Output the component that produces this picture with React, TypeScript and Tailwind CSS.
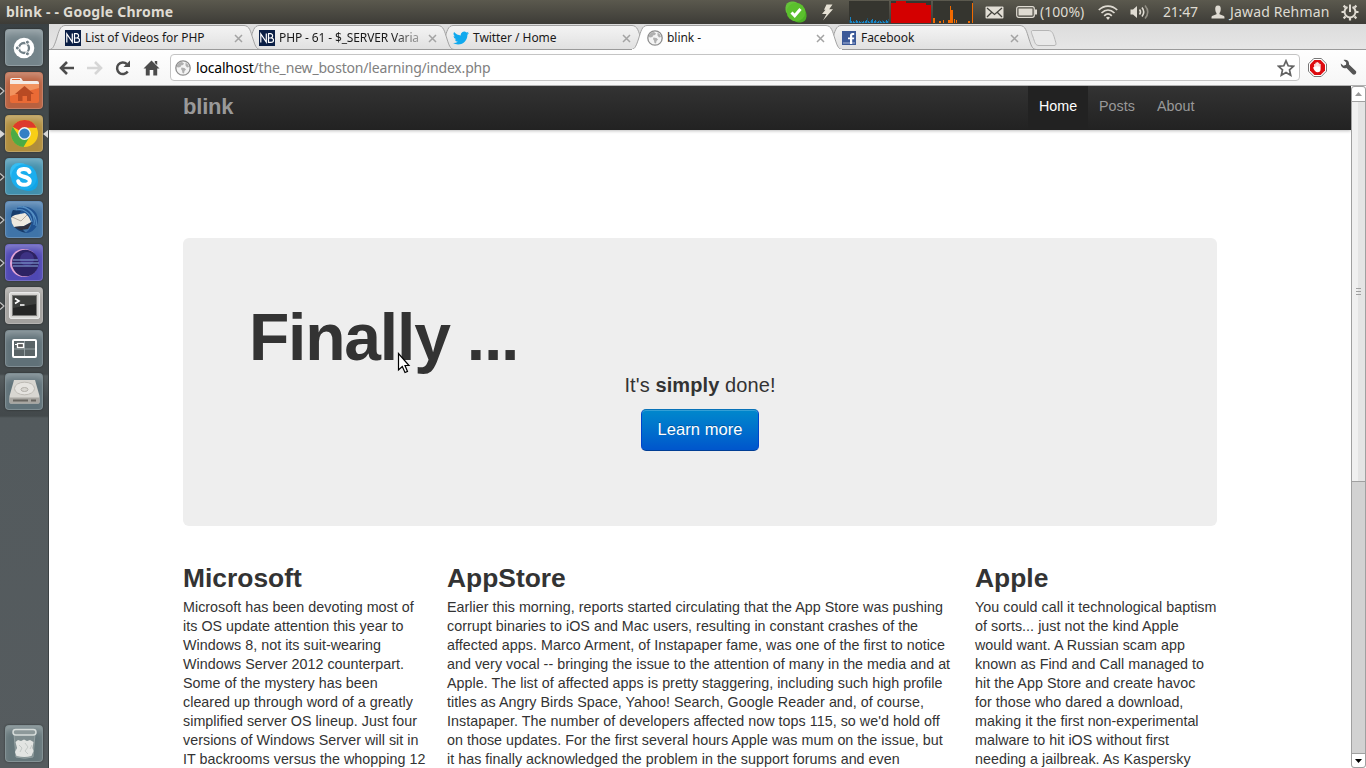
import type { ReactNode } from "react";

const UI = "font-['Noto_Sans','Open_Sans',sans-serif]";

function TabShape({ active }: { active?: boolean }) {
  return (
    <svg className="absolute inset-0" width="210" height="26" viewBox="0 0 210 26" fill="none">
      <defs>
        <linearGradient id="tabIdle" x1="0" y1="0" x2="0" y2="1">
          <stop offset="0" stopColor="#f4f4f4" />
          <stop offset="1" stopColor="#e0e0e0" />
        </linearGradient>
      </defs>
      <path
        d="M0 25.5C3 25 4.500 21 6.500 15C9 7 10 1.800 15 1.500H194C199.500 1.800 200.500 7 203 15C205 21 206 25 210 25.500"
        fill={active ? "#fefefe" : "url(#tabIdle)"}
        stroke="#a2a2a2"
      />
      {active ? <path d="M0 25.500H210" stroke="#fdfdfd" /> : <path d="M0 25.500H210" stroke="#9a9a9a" />}
    </svg>
  );
}

function Globe() {
  return (
    <svg width="16" height="16" viewBox="0 0 16 16">
      <circle cx="8" cy="8" r="7.200" fill="#f4f4f4" stroke="#8e8e8e" strokeWidth="1.300" />
      <path d="M2 5L4 2.500L7 2L9 3.500L8 5L6 5.500L5.500 7L3 7.500L2 7ZM6.500 7.500L9.500 8L11 9.500L9.500 11L9 13.500L7.500 13L7 10.500L6 9ZM10.500 2.500L13 4.500L14 7L12 7.500L10.500 5.500Z" fill="#b0b0b0" />
    </svg>
  );
}

function NB() {
  return (
    <svg width="16" height="16" viewBox="0 0 16 16">
      <rect width="16" height="16" fill="#0b1f45" />
      <path d="M1.800 12.500V4L7.300 12V3.500M9.500 3.700V12.300H12C15.300 12.300 15.300 8 12 8H9.500H11.500C14.300 7.800 14.300 3.700 11.500 3.700H9" stroke="#fff" strokeWidth="1.200" fill="none" />
    </svg>
  );
}

function Twitter() {
  return (
    <svg width="16" height="16" viewBox="0 0 24 24">
      <path
        fill="#10a9ee"
        d="M23.950 4.570a10 10 0 0 1-2.820.770 4.960 4.960 0 0 0 2.160-2.720c-.95.550-2 .960-3.130 1.180a4.920 4.920 0 0 0-8.380 4.480C7.690 8.100 4.070 6.130 1.640 3.160a4.920 4.920 0 0 0 1.520 6.570 4.900 4.900 0 0 1-2.230-.610v.060a4.920 4.920 0 0 0 3.950 4.830 5 5 0 0 1-2.210.080 4.940 4.940 0 0 0 4.600 3.420A9.870 9.870 0 0 1 0 19.540a13.990 13.990 0 0 0 7.560 2.210c9.050 0 14-7.500 14-13.980 0-.21 0-.420-.02-.630a9.940 9.940 0 0 0 2.410-2.570z"
      />
    </svg>
  );
}

function Facebook() {
  return (
    <svg className="ml-px" width="14" height="14" viewBox="0 0 14 14">
      <rect width="14" height="14" fill="#3b5998" />
      <rect x="1" y="11" width="12" height="2" fill="#7388b8" />
      <path d="M8 13V8.300H6V6.400H8V4.800C8 2.900 9 2 10.600 2H12.200V4H11.200C10.400 4 10.200 4.300 10.200 5V6.400H12.200L12 8.300H10.200V13Z" fill="#fff" />
    </svg>
  );
}

const tabs = [
  { title: "List of Videos for PHP", icon: <NB />, z: "z-[5]" },
  { title: "PHP - 61 - $_SERVER Varia", icon: <NB />, z: "z-[4]", fade: true },
  { title: "Twitter / Home", icon: <Twitter />, z: "z-[3]" },
  { title: "blink -", icon: <Globe />, z: "z-[6]", active: true },
  { title: "Facebook", icon: <Facebook />, z: "z-[1]" },
];

function TabStrip() {
  return (
    <div className="flex h-[26px] shrink-0 border-b border-[#9a9a9a] bg-gradient-to-b from-[#dcdcdc] to-[#e6e6e6]">
      <div className="flex h-[26px] pl-px">
        {tabs.map((t) => (
          <div key={t.title} className={`relative -mr-4 h-[26px] w-[210px] shrink-0 ${t.z}`}>
            <TabShape active={t.active} />
            <div className="relative flex h-[26px] items-center pt-0.5 pl-[15px]">
              <span className="flex w-5 shrink-0">{t.icon}</span>
              <span
                className={`w-[145px] whitespace-nowrap text-[12px] leading-4 text-[#1a1a1a] ${
                  t.fade
                    ? "tracking-[-0.13px] [mask-image:linear-gradient(to_right,#000_114px,rgba(0,0,0,.25)_144px)]"
                    : "tracking-[-0.05px]"
                }`}
              >
                {t.title}
              </span>
              <svg className="ml-1" width="9" height="9" viewBox="0 0 9 9">
                <path d="M1 1L8 8M8 1L1 8" stroke="#a3a3a3" strokeWidth="1.500" />
              </svg>
            </div>
          </div>
        ))}
      </div>
      <svg className="ml-[10px] mt-1.5" width="28" height="17" viewBox="0 0 28 17">
        <path d="M2.500 0.500H18C22 0.500 23 3 24.500 8C25.500 12 27.500 15.500 24 15.500H9C5.500 15.500 5 13 3.500 8.500C2.500 5 0 1 2.500 0.500Z" fill="#e9e9e9" stroke="#b5b5b5" />
      </svg>
    </div>
  );
}

function Toolbar() {
  return (
    <div className="flex h-9 shrink-0 items-center border-b border-[#b2b2b2] bg-gradient-to-b from-[#fefefe] to-[#f6f6f6]">
      <svg className="ml-[10px]" width="16" height="14" viewBox="0 0 16 14" fill="none" stroke="#4c4c4c" strokeWidth="2.600">
        <path d="M15 7H2.500M8 1L2 7L8 13" />
      </svg>
      <svg className="ml-3" width="16" height="14" viewBox="0 0 16 14" fill="none" stroke="#d6d6d6" strokeWidth="2.600">
        <path d="M0 7H13M8 1L14 7L8 13" />
      </svg>
      <svg className="ml-3" width="16" height="16" viewBox="0 0 16 16">
        <path d="M12.700 11.500A5.800 5.800 0 1 1 11.800 4" fill="none" stroke="#4c4c4c" strokeWidth="2.500" />
        <path d="M15 0.500V7H8.500Z" fill="#4c4c4c" />
      </svg>
      <svg className="ml-3" width="17" height="16" viewBox="0 0 17 16">
        <path d="M8.500 0.500L16.500 8.500H14.200V15.500H10.300V10H6.700V15.500H2.800V8.500H0.500ZM11.800 1H14.200V5L11.800 3Z" fill="#4c4c4c" />
      </svg>
      <div className="ml-[10px] flex h-[27px] w-[1130px] items-center rounded-[4px] border border-[#c4c4c4] bg-white pl-1">
        <Globe />
        <div className="ml-[5px] flex-1 text-[14px] tracking-[-0.18px] text-[#808080]">
          <span className="text-black">localhost</span>/the_new_boston/learning/index.php
        </div>
        <svg className="mr-1" width="18" height="18" viewBox="0 0 18 18">
          <path d="M9 1.800L11.200 6.800L16.500 7.300L12.500 10.900L13.700 16.200L9 13.400L4.300 16.200L5.500 10.900L1.500 7.300L6.800 6.800Z" fill="#fff" stroke="#636363" strokeWidth="1.700" />
        </svg>
      </div>
      <svg className="ml-2" width="19" height="19" viewBox="0 0 19 19">
        <path d="M5.800 0.500H13.200L18.500 5.800V13.200L13.200 18.500H5.800L0.500 13.200V5.800Z" fill="#fff" stroke="#777" />
        <path d="M6.400 2H12.600L17 6.400V12.600L12.600 17H6.400L2 12.600V6.400Z" fill="#dd0b10" />
        <path d="M5 9.500L6.200 9V6H7.400V4.800H8.600V4.300H10V4.800H11.300V6H12.600V11C12.600 13.300 11.700 14.200 9.700 14.200C7.500 14.200 6.300 12.500 5 9.500Z" fill="#fff" />
        <path d="M7.500 5.500V8.500M8.900 5V8.500M10.300 5V8.500M11.500 6V8.500" stroke="#e88" strokeWidth=".4" />
      </svg>
      <svg className="ml-[13px]" width="17" height="17" viewBox="0 0 17 17">
        <path d="M3.500 1C6.500 0 9.500 2 9 5.500L15.800 12C17.300 14 14.600 16.800 12.600 15.200L6.500 9C3.500 10 0.500 8 0.800 4.500L3.500 6.800L6 5.800L6.200 3.500Z" fill="#555" />
      </svg>
    </div>
  );
}

function StatusGraph({ children }: { children: ReactNode }) {
  return (
    <svg className="mr-0.5" width="40" height="22" viewBox="0 0 40 22" shapeRendering="crispEdges">
      <rect width="40" height="22" fill="#35352f" />
      {children}
    </svg>
  );
}

const netBars = [3, 6, 2, 1, 2, 1, 2, 3, 2, 1, 2, 1, 2, 1, 2, 1, 2, 3, 5, 2, 1, 2, 3, 4, 1, 2, 3, 2, 1, 2, 3, 2, 1, 3, 2, 1, 2, 3, 2, 4];

function TopPanel() {
  return (
    <header className="flex h-6 shrink-0 items-center bg-gradient-to-b from-[#5b594e] to-[#3d3c37] text-[#dfdbd2]">
      <div className="w-[785px] pl-1.5 text-[14px] font-bold leading-5 tracking-[0.22px]">blink - - Google Chrome</div>
      <svg width="22" height="22" viewBox="0 0 22 22">
        <rect x="0.500" y="0.500" width="14" height="14" rx="6" fill="#66c33a" />
        <rect x="7.500" y="7.500" width="14" height="14" rx="6" fill="#4cae25" />
        <circle cx="11" cy="11" r="9.300" fill="#5bc02d" />
        <path d="M6.500 11.500L9.700 14.700L15.500 8" stroke="#fff" strokeWidth="3" fill="none" />
      </svg>
      <svg className="ml-[14px]" width="13" height="17" viewBox="0 0 13 17">
        <path d="M5.500 0.500H11.500L8.200 5.200H12L2 16.500L5.500 10H1L4.500 5.800H3Z" fill="#e6e1d4" />
      </svg>
      <div className="ml-[15px] flex">
        <StatusGraph>
          {netBars.map((h, i) => (
            <rect key={i} x={i} y={22 - h} width="1" height={h} fill={i % 3 ? "#1784c4" : "#23526b"} />
          ))}
        </StatusGraph>
        <StatusGraph>
          <path d="M0 22V2H5V0H15V2H35V4H40V22Z" fill="#d40000" />
        </StatusGraph>
        <StatusGraph>
          <path d="M0 22V17H2V22ZM6 22V20H8V22ZM10 22V19H11V22ZM15 22V19H17V5H18V9H20V22ZM21 22V18H22V22ZM23 22V19H24V22ZM35 22V20H37V22ZM39 22V2H40V22Z" fill="#f26a00" />
        </StatusGraph>
      </div>
      <svg className="ml-[10px]" width="19" height="13" viewBox="0 0 19 13">
        <rect x="0.500" y="0.500" width="18" height="12" rx="1" fill="#e2ded5" />
        <path d="M2 2L9.500 8.500L17 2M2 11L6.500 6.500M17 11L12.500 6.500" stroke="#45443e" strokeWidth="1.300" fill="none" />
      </svg>
      <svg className="ml-3" width="21" height="12" viewBox="0 0 21 12">
        <rect x="0.700" y="0.700" width="17.600" height="10.600" rx="2" fill="none" stroke="#dfdbd2" strokeWidth="1.200" />
        <rect x="2.500" y="2.500" width="14" height="7" fill="#dfdbd2" />
        <rect x="19" y="3.500" width="2" height="5" fill="#dfdbd2" />
      </svg>
      <span className="ml-[3px] w-[46px] whitespace-nowrap text-[14px] leading-5 tracking-[0.05px]">(100%)</span>
      <svg className="ml-3" width="20" height="15" viewBox="0 0 20 15" fill="none" stroke="#dfdbd2" strokeWidth="1.700">
        <path d="M0.800 5C6-.3 14-.3 19.200 5M3.500 8C7.500 4.200 12.500 4.200 16.500 8M6.200 10.800C8.500 8.500 11.500 8.500 13.800 10.800" />
        <path d="M8 12.500L10 15L12 12.500Q10 11 8 12.500Z" fill="#dfdbd2" stroke="none" />
      </svg>
      <svg className="ml-3" width="20" height="16" viewBox="0 0 20 16" fill="none" stroke="#dfdbd2" strokeWidth="1.600">
        <path d="M0.500 5.500H3L7 2V14L3 10.500H0.500Z" fill="#dfdbd2" stroke="none" />
        <path d="M9.500 5.500Q11.500 8 9.500 10.500M12 3.500Q15.500 8 12 12.500" />
        <path d="M15 1.500Q20.500 8 15 14.500" stroke="#918e84" />
      </svg>
      <span className="ml-[13px] w-9 whitespace-nowrap text-[14px] leading-5 tracking-[-0.2px]">21:47</span>
      <svg className="ml-3" width="14" height="14" viewBox="0 0 14 14">
        <path d="M7 0.500C4.500 0.500 4 2.500 4.300 5C4.500 6.500 5 7.500 5.500 8V9.200L1 11C.5 11.500.5 12.500.5 13.500H13.500C13.500 12.500 13.500 11.500 13 11L8.500 9.200V8C9 7.500 9.500 6.500 9.700 5C10 2.500 9.500.5 7 .5Z" fill="#dfdbd2" />
      </svg>
      <span className="ml-[5px] w-[101px] whitespace-nowrap text-[14px] leading-5 tracking-[0.15px]">Jawad Rehman</span>
      <svg className="ml-[10px]" width="18" height="18" viewBox="0 0 18 18" fill="none" stroke="#dfdbd2">
        <path d="M6.500 4A5.500 5.500 0 1 0 11.500 4" strokeWidth="2" />
        <path d="M9 1.500V9" strokeWidth="2" />
        <path d="M4.500 4.500L2.600 2.600M13.500 4.500L15.400 2.600M3.500 9H.5M14.500 9H17.500M4.500 13.500L2.600 15.400M13.500 13.500L15.400 15.400M9 15V17.500" strokeWidth="2.200" />
      </svg>
    </header>
  );
}

function Tile({ bg, running, focused, children }: { bg: string; running?: boolean; focused?: boolean; children: ReactNode }) {
  return (
    <div className="flex h-[37px] w-[48px] shrink-0 items-center">
      <svg className="w-[5px] shrink-0" width="5" height="10" viewBox="0 0 5 10">
        {running && !focused && <path d="M0 1.500L4 5L0 8.500" fill="#333" stroke="#c8c8c8" strokeWidth="1.200" />}
        {focused && <path d="M0 1L5 5L0 9Z" fill="#d8d8d8" />}
      </svg>
      <div className={`flex h-[37px] w-[38px] shrink-0 items-center justify-center rounded-[4px] border border-white/20 shadow-[inset_0_7px_8px_-4px_rgba(255,255,255,.35),0_0_2px_rgba(0,0,0,.5)] ${bg}`}>
        {children}
      </div>
      <svg className="w-[5px] shrink-0" width="5" height="10" viewBox="0 0 5 10">
        {focused && <path d="M5 1L0 5L5 9Z" fill="#d8d8d8" />}
      </svg>
    </div>
  );
}

function Launcher() {
  return (
    <aside className="flex w-[49px] shrink-0 flex-col border-r border-[#3c4244] bg-[linear-gradient(to_bottom,#3a4144_0px,#43494b_60px,#43494b_350px,#565d5f_352px,#454b4e_375px,#43494b_392px,#535a5d_394px,#565c5f_744px)] pt-[5px] pb-[6px]">
      <div className="flex flex-col gap-1.5">
        <Tile bg="bg-[#74848a]">
          <svg width="22" height="22" viewBox="0 0 22 22">
            <circle cx="11" cy="11" r="10.300" fill="#fff" />
            <circle cx="11" cy="11" r="5" fill="none" stroke="#718087" strokeWidth="2.300" />
            <path d="M11 11L2 11M11 11L15.500 3.200M11 11L15.500 18.800" stroke="#fff" strokeWidth="1" />
            <g fill="#718087" stroke="#fff" strokeWidth="1">
              <circle cx="4.300" cy="11" r="2" />
              <circle cx="14.400" cy="5.200" r="2" />
              <circle cx="14.400" cy="16.800" r="2" />
            </g>
          </svg>
        </Tile>
        <Tile bg="bg-[#b8603f]" running>
          <svg width="31" height="27" viewBox="0 0 31 27">
            <path d="M1 3Q1 1 3 1H12L14 4H28Q30 4 30 6V10H1Z" fill="#f3ebe6" />
            <path d="M3 2.500H11" stroke="#e8622b" />
            <path d="M1 7H30V24Q30 26 28 26H3Q1 26 1 24Z" fill="#ea6a35" />
            <path d="M1 7H30V11L1 19Z" fill="#f2935f" />
            <path d="M15.500 9L25 17H22V24H18V19H13.500V24H9V17H6Z" fill="#b84a23" />
          </svg>
        </Tile>
        <Tile bg="bg-[#b08d3c]" running focused>
          <svg width="29" height="29" viewBox="0 0 30 30">
            <circle cx="15" cy="15" r="14" fill="#f8cf16" />
            <path d="M15 15L2.800 8A14 14 0 0 1 27.600 9H15Z" fill="#dd3a2c" />
            <path d="M2.800 8A14 14 0 0 0 14 29L20.500 18L15 15L9.500 18Z" fill="#4cab45" />
            <circle cx="15" cy="15" r="6.600" fill="#f3f3f3" />
            <circle cx="15" cy="15" r="5.300" fill="#347fc4" />
          </svg>
        </Tile>
        <Tile bg="bg-[#418fac]" running>
          <svg width="30" height="30" viewBox="0 0 30 30">
            <rect x="1" y="1" width="19" height="19" rx="8.500" fill="#35bdf2" />
            <rect x="10" y="10" width="19" height="19" rx="8.500" fill="#12a4e5" />
            <circle cx="15" cy="15" r="12.800" fill="#1aaeee" />
            <path d="M20.500 10C19 5.500 9.500 6 9.500 10.700C9.500 15.700 20.800 13.700 20.800 18.900C20.800 24 10.500 24 9.200 19.200" fill="none" stroke="#fff" strokeWidth="4" strokeLinecap="round" />
          </svg>
        </Tile>
        <Tile bg="bg-[#3f74a8]" running>
          <svg width="30" height="30" viewBox="0 0 30 30">
            <path d="M8 3C16-1 28 3 29 14C29.500 23 22 29 16 28C20 26 23 21 22 16L8 6Z" fill="#205291" />
            <path d="M9 2C18 1 27 8 25 20M14 1.500C22 4 29 12 27 21M7 5C14 3 22 8 23 17" stroke="#5590c4" strokeWidth="1.100" fill="none" />
            <path d="M4 5C2 8 1 15 4 20C7 25 12 27 17 28C10 22 8 12 12 6Z" fill="#173c6b" />
            <path d="M2 13Q3 11 6 10L16 8Q20 11 22 17L15 21L5 22Q2 18 2 13Z" fill="#eee9df" />
            <path d="M3 12L12 16L18 10" fill="none" stroke="#a39c90" strokeWidth=".8" />
            <path d="M5 22L15 21L23 17L19 24L12 25Z" fill="#302f3b" />
          </svg>
        </Tile>
        <Tile bg="bg-[#4f48b4]" running>
          <svg width="30" height="30" viewBox="0 0 30 30">
            <circle cx="15" cy="15" r="14" fill="#e2a4d5" />
            <circle cx="16.300" cy="15" r="13.300" fill="#2c2262" />
            <circle cx="18" cy="11" r="7" fill="#3d3283" />
            <path d="M4 12H29M3 15H30M4 18H29" stroke="#87aade" strokeWidth="1.200" />
          </svg>
        </Tile>
        <Tile bg="bg-[#a3a19e]" running>
          <svg width="31" height="27" viewBox="0 0 31 27">
            <rect x="0.700" y="0.700" width="29.600" height="25.600" rx="1" fill="#d3d2cf" stroke="#f6f6f6" />
            <rect x="3.500" y="3.500" width="24" height="20" fill="#252625" stroke="#797977" />
            <path d="M4 4H27V12L4 16Z" fill="#3c3e3c" />
            <path d="M6 6.500L10 9L6 11.500M11 13H15.500" fill="none" stroke="#fff" strokeWidth="1.600" />
          </svg>
        </Tile>
        <Tile bg="bg-[#607178]">
          <svg width="25" height="19" viewBox="0 0 25 19">
            <rect x="1" y="1" width="23" height="17" rx="1" fill="#5a6467" stroke="#fff" strokeWidth="2" />
            <path d="M12.500 2V17M2 10H23" stroke="#929da0" />
            <rect x="5.500" y="4.500" width="6" height="4" fill="#555" stroke="#fff" strokeWidth="1.300" />
            <path d="M3 5.500H5" stroke="#fff" />
          </svg>
        </Tile>
        <Tile bg="bg-[#607279]">
          <svg width="31" height="25" viewBox="0 0 31 25">
            <path d="M5 1H26L30.500 17V23Q30.500 24.500 29 24.500H2Q.5 24.500.5 23V17Z" fill="#d8d6d1" />
            <path d="M.5 18.500H30.500V23Q30.500 24.500 29 24.500H2Q.5 24.500.5 23Z" fill="#a8a6a1" />
            <ellipse cx="15.500" cy="9.500" rx="10" ry="6.300" fill="#e6e4e0" stroke="#bebbb5" />
            <ellipse cx="15.500" cy="10.500" rx="3.500" ry="2" fill="#d8d6d1" stroke="#b4b1ab" />
            <path d="M4 21.500H19M22 21.500H27" stroke="#676560" strokeWidth="2" />
          </svg>
        </Tile>
      </div>
      <div className="mt-auto">
        <Tile bg="bg-[#66777b]">
          <svg width="25" height="31" viewBox="0 0 25 31">
            <path d="M2 6L4 29Q12.500 31.500 21 29L23 6Z" fill="#7f8d8f" stroke="#94a1a2" />
            <path d="M3.500 14L6 12L9 13L12 11.500L15 13L18 12L21.500 14L20.500 20L21.500 23L19.500 28Q12.500 30 4.500 28L3 24L5 20Z" fill="#e2e4e2" />
            <path d="M7 17L10 20L8 24M13 15L16 19L13 23L16 26M20 17L18 21" stroke="#c3c8c6" fill="none" />
            <rect x="1" y="1.500" width="23" height="5.500" rx="2.700" fill="#8d999a" stroke="#d6dcda" strokeWidth="1.500" />
          </svg>
        </Tile>
      </div>
    </aside>
  );
}

function Scrollbar() {
  return (
    <div className="flex w-[15px] shrink-0 flex-col rounded-[3px] border border-[#a0a0a0] bg-[#d2d2d2]">
      <div className="flex h-3.5 shrink-0 items-center justify-center rounded-t-[3px] bg-white">
        <svg width="7" height="4" viewBox="0 0 7 4"><path d="M3.500 0L7 4H0Z" fill="#999" /></svg>
      </div>
      <div className="flex h-[381px] shrink-0 flex-col items-center justify-center gap-0.5 border-y border-[#a0a0a0] bg-[linear-gradient(to_right,#f0f0f0_50%,#e4e4e4_50%)]">
        <div className="h-px w-[5px] bg-[#a0a0a0]" />
        <div className="h-px w-[5px] bg-[#a0a0a0]" />
        <div className="h-px w-[5px] bg-[#a0a0a0]" />
      </div>
      <div className="mt-auto flex h-3.5 shrink-0 items-center justify-center rounded-b-[3px] border-t border-[#a0a0a0] bg-white">
        <svg width="7" height="4" viewBox="0 0 7 4"><path d="M3.500 4L7 0H0Z" fill="#000" /></svg>
      </div>
    </div>
  );
}

const articles = [
  {
    title: "Microsoft",
    width: "w-[242px]",
    lines: [
      "Microsoft has been devoting most of",
      "its OS update attention this year to",
      "Windows 8, not its suit-wearing",
      "Windows Server 2012 counterpart.",
      "Some of the mystery has been",
      "cleared up through word of a greatly",
      "simplified server OS lineup. Just four",
      "versions of Windows Server will sit in",
      "IT backrooms versus the whopping 12",
    ],
  },
  {
    title: "AppStore",
    width: "w-[506px]",
    lines: [
      "Earlier this morning, reports started circulating that the App Store was pushing",
      "corrupt binaries to iOS and Mac users, resulting in constant crashes of the",
      "affected apps. Marco Arment, of Instapaper fame, was one of the first to notice",
      "and very vocal -- bringing the issue to the attention of many in the media and at",
      "Apple. The list of affected apps is pretty staggering, including such high profile",
      "titles as Angry Birds Space, Yahoo! Search, Google Reader and, of course,",
      "Instapaper. The number of developers affected now tops 115, so we'd hold off",
      "on those updates. For the first several hours Apple was mum on the issue, but",
      "it has finally acknowledged the problem in the support forums and even",
    ],
  },
  {
    title: "Apple",
    width: "w-[242px]",
    lines: [
      "You could call it technological baptism",
      "of sorts... just not the kind Apple",
      "would want. A Russian scam app",
      "known as Find and Call managed to",
      "hit the App Store and create havoc",
      "for those who dared a download,",
      "making it the first non-experimental",
      "malware to hit iOS without first",
      "needing a jailbreak. As Kaspersky",
    ],
  },
];

function Page() {
  return (
    <main className="flex-1 overflow-hidden bg-white font-['Liberation_Sans',Arial,sans-serif] text-[#333]">
      <nav className="h-11 bg-gradient-to-b from-[#333] to-[#222] shadow-[0_1px_3px_rgba(0,0,0,.25)]">
        <div className="mx-auto flex h-11 w-[1034px] justify-between">
          <span className="pt-[10px] text-[22px] font-bold leading-[22px] tracking-[-0.2px] text-[#999]">blink</span>
          <div className="mr-[11px] flex text-[14.300px] leading-5 tracking-[0.03px] text-[#999]">
            <span className="w-[60px] bg-[#222] pt-[10px] pl-[11px] text-white">Home</span>
            <span className="w-[58px] pt-[10px] pl-[11px]">Posts</span>
            <span className="w-[60px] pt-[10px] pl-[11px]">About</span>
          </div>
        </div>
      </nav>
      <section className="relative mx-auto mt-[108px] h-[288px] w-[1034px] rounded-[6px] bg-[#eee] px-[66px] pt-[66px]">
        <h1 className="text-[66px] font-bold leading-[66px] tracking-[-1.200px]">Finally ...</h1>
        <div className="flex flex-col items-center">
          <p className="pt-0.5 text-[20px] leading-[26px] tracking-[0.1px]">
            It's <b>simply</b> done!
          </p>
          <button className="mt-[11px] h-[42px] w-[118px] rounded-[5px] border border-[#04c] border-b-[#003d94] border-t-[#0872b8] bg-gradient-to-b from-[#08c] to-[#05c] pb-0.5 text-[16.500px] text-white tracking-[0.08px] shadow-[inset_0_1px_0_rgba(255,255,255,.2)] [text-shadow:0_-1px_0_rgba(0,0,0,.25)]">
            Learn more
          </button>
        </div>
        <svg className="absolute top-[114px] left-[214px]" width="14" height="22" viewBox="0 0 14 22">
          <path d="M1.500 1.500V18L5.300 14.500L8 20.500L10.500 19.400L8 13.500H12Z" fill="#fff" stroke="#000" strokeWidth="1.200" />
        </svg>
      </section>
      <div className="mx-auto mt-[33px] flex w-[1034px] gap-[22px]">
        {articles.map((a) => (
          <article key={a.title} className={a.width}>
            <h2 className="text-[26.400px] font-bold leading-[39px]">{a.title}</h2>
            <p className="text-[14.300px] leading-[19px] tracking-[0.03px]">
              {a.lines.map((l) => (
                <span key={l} className="block whitespace-nowrap">
                  {l}
                </span>
              ))}
            </p>
          </article>
        ))}
      </div>
    </main>
  );
}

export default function App() {
  return (
    <div className={`flex h-[768px] w-[1366px] flex-col overflow-hidden ${UI}`}>
      <TopPanel />
      <div className="flex min-h-0 flex-1">
        <Launcher />
        <div className="flex min-w-0 flex-1 flex-col">
          <TabStrip />
          <Toolbar />
          <div className="flex min-h-0 flex-1">
            <Page />
            <Scrollbar />
          </div>
        </div>
      </div>
    </div>
  );
}
